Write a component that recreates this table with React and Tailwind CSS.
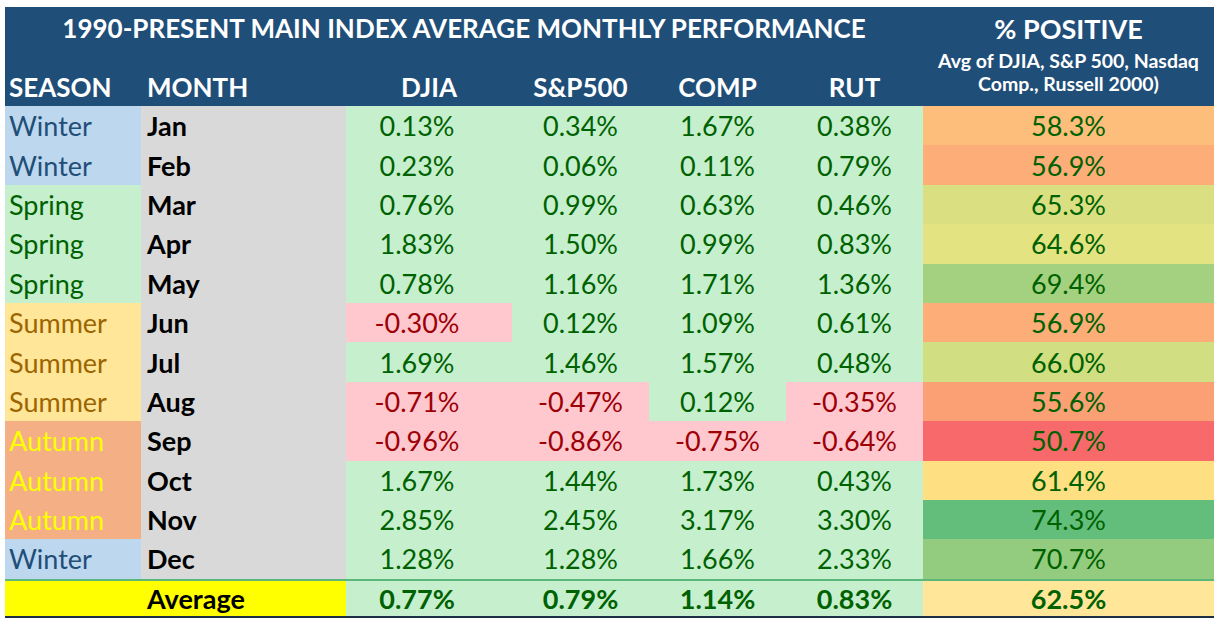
import React from "react";

const seasonStyle = {
  Winter: "bg-[#bdd7ee] text-[#1f4e78]",
  Spring: "bg-[#c6efce] text-[#006100]",
  Summer: "bg-[#ffe699] text-[#9c6500]",
  Autumn: "bg-[#f4b084] text-[#ffff00]",
};

const rows = [
  { s: "Winter", m: "Jan", v: ["0.13%", "0.34%", "1.67%", "0.38%"], p: "58.3%", pc: "bg-[#fdbd7b]" },
  { s: "Winter", m: "Feb", v: ["0.23%", "0.06%", "0.11%", "0.79%"], p: "56.9%", pc: "bg-[#fcad78]" },
  { s: "Spring", m: "Mar", v: ["0.76%", "0.99%", "0.63%", "0.46%"], p: "65.3%", pc: "bg-[#dae082]" },
  { s: "Spring", m: "Apr", v: ["1.83%", "1.50%", "0.99%", "0.83%"], p: "64.6%", pc: "bg-[#e3e382]" },
  { s: "Spring", m: "May", v: ["0.78%", "1.16%", "1.71%", "1.36%"], p: "69.4%", pc: "bg-[#a4d17f]" },
  { s: "Summer", m: "Jun", v: ["-0.30%", "0.12%", "1.09%", "0.61%"], p: "56.9%", pc: "bg-[#fcad78]" },
  { s: "Summer", m: "Jul", v: ["1.69%", "1.46%", "1.57%", "0.48%"], p: "66.0%", pc: "bg-[#d1de81]" },
  { s: "Summer", m: "Aug", v: ["-0.71%", "-0.47%", "0.12%", "-0.35%"], p: "55.6%", pc: "bg-[#fb9f75]" },
  { s: "Autumn", m: "Sep", v: ["-0.96%", "-0.86%", "-0.75%", "-0.64%"], p: "50.7%", pc: "bg-[#f8696b]" },
  { s: "Autumn", m: "Oct", v: ["1.67%", "1.44%", "1.73%", "0.43%"], p: "61.4%", pc: "bg-[#fedf82]" },
  { s: "Autumn", m: "Nov", v: ["2.85%", "2.45%", "3.17%", "3.30%"], p: "74.3%", pc: "bg-[#63be7b]" },
  { s: "Winter", m: "Dec", v: ["1.28%", "1.28%", "1.66%", "2.33%"], p: "70.7%", pc: "bg-[#93cc7e]" },
];

function ValueCell({ v, first }) {
  const neg = v.startsWith("-");
  return (
    <div
      className={
        "h-[39.4px] flex items-center justify-center text-[27px] " +
        (first ? "pr-[24px] " : "") +
        (neg ? "bg-[#ffc7ce] text-[#9c0006]" : "bg-[#c6efce] text-[#006100]")
      }
    >
      {v}
    </div>
  );
}

export default function App() {
  return (
    <div className="w-[1224px] h-[628px] bg-white pt-[7px] pl-[5px] font-['Lato',sans-serif] leading-none">
      <div className="grid w-[1209px] grid-cols-[136px_205px_166px_137px_137px_137px_291px]">
        <div className="col-span-6 h-[43px] bg-[#1f4e78] text-white font-bold text-[26px] flex items-center justify-center pb-[2px]">
          1990-PRESENT MAIN INDEX AVERAGE MONTHLY PERFORMANCE
        </div>
        <div className="row-span-2 bg-[#1f4e78] text-white font-bold flex flex-col items-center pt-[6px]">
          <div className="text-[27px] h-[30px] flex items-center">% POSITIVE</div>
          <div className="text-[19.5px] mt-[6px] h-[23px] flex items-center">Avg of DJIA, S&amp;P 500, Nasdaq</div>
          <div className="text-[19.5px] h-[23px] flex items-center">Comp., Russell 2000)</div>
        </div>
        <div className="h-[56px] bg-[#1f4e78] text-white font-bold text-[26px] flex items-end pb-[6px] pl-[4px]">SEASON</div>
        <div className="h-[56px] bg-[#1f4e78] text-white font-bold text-[26px] flex items-end pb-[6px] pl-[6px]">MONTH</div>
        <div className="h-[56px] bg-[#1f4e78] text-white font-bold text-[26px] flex items-end justify-center pb-[6px]">DJIA</div>
        <div className="h-[56px] bg-[#1f4e78] text-white font-bold text-[26px] flex items-end justify-center pb-[6px]">S&amp;P500</div>
        <div className="h-[56px] bg-[#1f4e78] text-white font-bold text-[26px] flex items-end justify-center pb-[6px]">COMP</div>
        <div className="h-[56px] bg-[#1f4e78] text-white font-bold text-[26px] flex items-end justify-center pb-[6px]">RUT</div>

        {rows.map((r) => (
          <React.Fragment key={r.m}>
            <div className={"h-[39.4px] flex items-center pl-[4px] text-[27px] " + seasonStyle[r.s]}>{r.s}</div>
            <div className="h-[39.4px] flex items-center pl-[6px] text-[27px] font-bold bg-[#d9d9d9] text-black">{r.m}</div>
            {r.v.map((v, i) => (
              <ValueCell key={i} v={v} first={i === 0} />
            ))}
            <div className={"h-[39.4px] flex items-center justify-center text-[27px] text-[#006100] " + r.pc}>{r.p}</div>
          </React.Fragment>
        ))}

        <div className="h-[39px] bg-[#ffff00] border-t-2 border-t-[#5cb87a] border-b-2 border-b-[#1c2f45]"></div>
        <div className="h-[39px] bg-[#ffff00] border-t-2 border-t-[#5cb87a] border-b-2 border-b-[#1c2f45] flex items-center pl-[6px] text-[27px] font-bold text-black">Average</div>
        <div className="h-[39px] bg-[#c6efce] border-t-2 border-t-[#5cb87a] border-b-2 border-b-[#1c2f45] flex items-center justify-center pr-[24px] text-[27px] font-bold text-[#006100]">0.77%</div>
        <div className="h-[39px] bg-[#c6efce] border-t-2 border-t-[#5cb87a] border-b-2 border-b-[#1c2f45] flex items-center justify-center text-[27px] font-bold text-[#006100]">0.79%</div>
        <div className="h-[39px] bg-[#c6efce] border-t-2 border-t-[#5cb87a] border-b-2 border-b-[#1c2f45] flex items-center justify-center text-[27px] font-bold text-[#006100]">1.14%</div>
        <div className="h-[39px] bg-[#c6efce] border-t-2 border-t-[#5cb87a] border-b-2 border-b-[#1c2f45] flex items-center justify-center text-[27px] font-bold text-[#006100]">0.83%</div>
        <div className="h-[39px] bg-[#ffe699] border-t-2 border-t-[#5cb87a] border-b-2 border-b-[#1c2f45] flex items-center justify-center text-[27px] font-bold text-[#006100]">62.5%</div>
      </div>
    </div>
  );
}
